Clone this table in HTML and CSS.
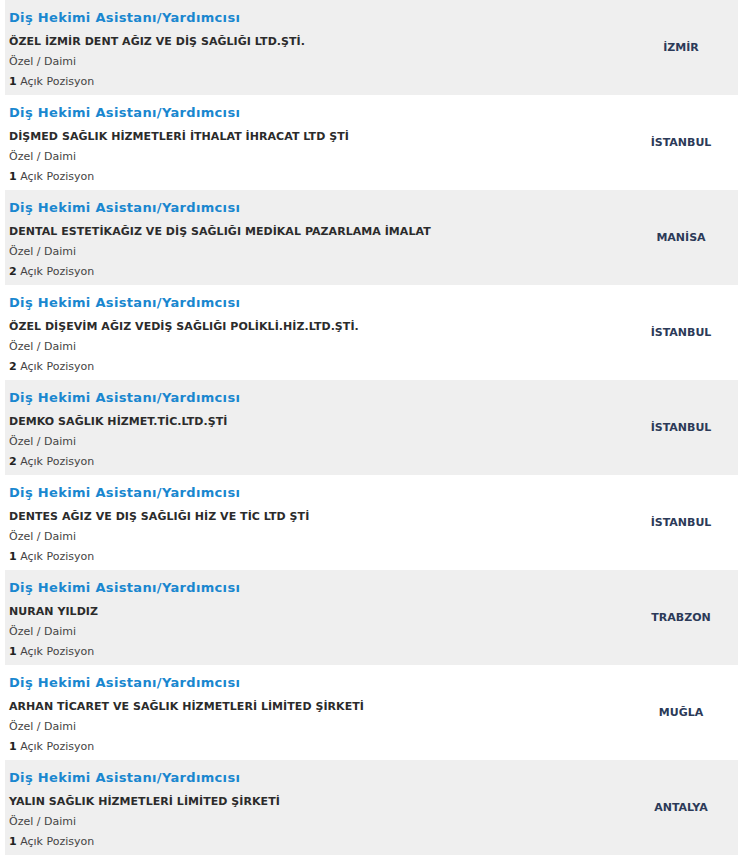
FILE: index.html
```html
<!DOCTYPE html>
<html lang="tr">
<head>
<meta charset="utf-8">
<link rel="stylesheet" href="styles.css">
</head>
<body>
<div class="list">
  <div class="row odd">
    <div class="info">
      <a class="title" href="#">Diş Hekimi Asistanı/Yardımcısı</a>
      <div class="company">ÖZEL İZMİR DENT AĞIZ VE DİŞ SAĞLIĞI LTD.ŞTİ.</div>
      <div class="meta">Özel / Daimi</div>
      <div class="meta"><b>1</b> Açık Pozisyon</div>
    </div>
    <div class="city">İZMİR</div>
  </div>
  <div class="row">
    <div class="info">
      <a class="title" href="#">Diş Hekimi Asistanı/Yardımcısı</a>
      <div class="company">DİŞMED SAĞLIK HİZMETLERİ İTHALAT İHRACAT LTD ŞTİ</div>
      <div class="meta">Özel / Daimi</div>
      <div class="meta"><b>1</b> Açık Pozisyon</div>
    </div>
    <div class="city">İSTANBUL</div>
  </div>
  <div class="row odd">
    <div class="info">
      <a class="title" href="#">Diş Hekimi Asistanı/Yardımcısı</a>
      <div class="company">DENTAL ESTETİKAĞIZ VE DİŞ SAĞLIĞI MEDİKAL PAZARLAMA İMALAT</div>
      <div class="meta">Özel / Daimi</div>
      <div class="meta"><b>2</b> Açık Pozisyon</div>
    </div>
    <div class="city">MANİSA</div>
  </div>
  <div class="row">
    <div class="info">
      <a class="title" href="#">Diş Hekimi Asistanı/Yardımcısı</a>
      <div class="company">ÖZEL DİŞEVİM AĞIZ VEDİŞ SAĞLIĞI POLİKLİ.HİZ.LTD.ŞTİ.</div>
      <div class="meta">Özel / Daimi</div>
      <div class="meta"><b>2</b> Açık Pozisyon</div>
    </div>
    <div class="city">İSTANBUL</div>
  </div>
  <div class="row odd">
    <div class="info">
      <a class="title" href="#">Diş Hekimi Asistanı/Yardımcısı</a>
      <div class="company">DEMKO SAĞLIK HİZMET.TİC.LTD.ŞTİ</div>
      <div class="meta">Özel / Daimi</div>
      <div class="meta"><b>2</b> Açık Pozisyon</div>
    </div>
    <div class="city">İSTANBUL</div>
  </div>
  <div class="row">
    <div class="info">
      <a class="title" href="#">Diş Hekimi Asistanı/Yardımcısı</a>
      <div class="company">DENTES AĞIZ VE DIŞ SAĞLIĞI HİZ VE TİC LTD ŞTİ</div>
      <div class="meta">Özel / Daimi</div>
      <div class="meta"><b>1</b> Açık Pozisyon</div>
    </div>
    <div class="city">İSTANBUL</div>
  </div>
  <div class="row odd">
    <div class="info">
      <a class="title" href="#">Diş Hekimi Asistanı/Yardımcısı</a>
      <div class="company">NURAN YILDIZ</div>
      <div class="meta">Özel / Daimi</div>
      <div class="meta"><b>1</b> Açık Pozisyon</div>
    </div>
    <div class="city">TRABZON</div>
  </div>
  <div class="row">
    <div class="info">
      <a class="title" href="#">Diş Hekimi Asistanı/Yardımcısı</a>
      <div class="company">ARHAN TİCARET VE SAĞLIK HİZMETLERİ LİMİTED ŞİRKETİ</div>
      <div class="meta">Özel / Daimi</div>
      <div class="meta"><b>1</b> Açık Pozisyon</div>
    </div>
    <div class="city">MUĞLA</div>
  </div>
  <div class="row odd">
    <div class="info">
      <a class="title" href="#">Diş Hekimi Asistanı/Yardımcısı</a>
      <div class="company">YALIN SAĞLIK HİZMETLERİ LİMİTED ŞİRKETİ</div>
      <div class="meta">Özel / Daimi</div>
      <div class="meta"><b>1</b> Açık Pozisyon</div>
    </div>
    <div class="city">ANTALYA</div>
  </div>
</div>
</body>
</html>
```
FILE: styles.css
```css
html, body {
  margin: 0;
  padding: 0;
  background: #ffffff;
}
body {
  font-family: "DejaVu Sans", Verdana, sans-serif;
  color: #333333;
}
.list {
  padding-left: 5px;
}
.row {
  display: grid;
  grid-template-columns: 1fr 114px;
  height: 95px;
  box-sizing: border-box;
  background: #ffffff;
}
.row.odd {
  background: #efefef;
}
.info {
  padding: 7px 0 0 4px;
  display: flex;
  flex-direction: column;
}
.title {
  font-size: 13px;
  font-weight: bold;
  color: #1a87cf;
  text-decoration: none;
  letter-spacing: 0.33px;
  line-height: 22px;
  height: 22px;
}
.company {
  font-size: 11px;
  font-weight: bold;
  color: #2b2b2b;
  letter-spacing: 0.05px;
  line-height: 20px;
  margin-top: 3px;
}
.meta {
  font-size: 11px;
  color: #444444;
  line-height: 20px;
}
.meta b {
  color: #222222;
}
.city {
  display: flex;
  align-items: center;
  justify-content: center;
  font-size: 11px;
  font-weight: bold;
  color: #2c3a58;
  padding-bottom: 1px;
}
```
